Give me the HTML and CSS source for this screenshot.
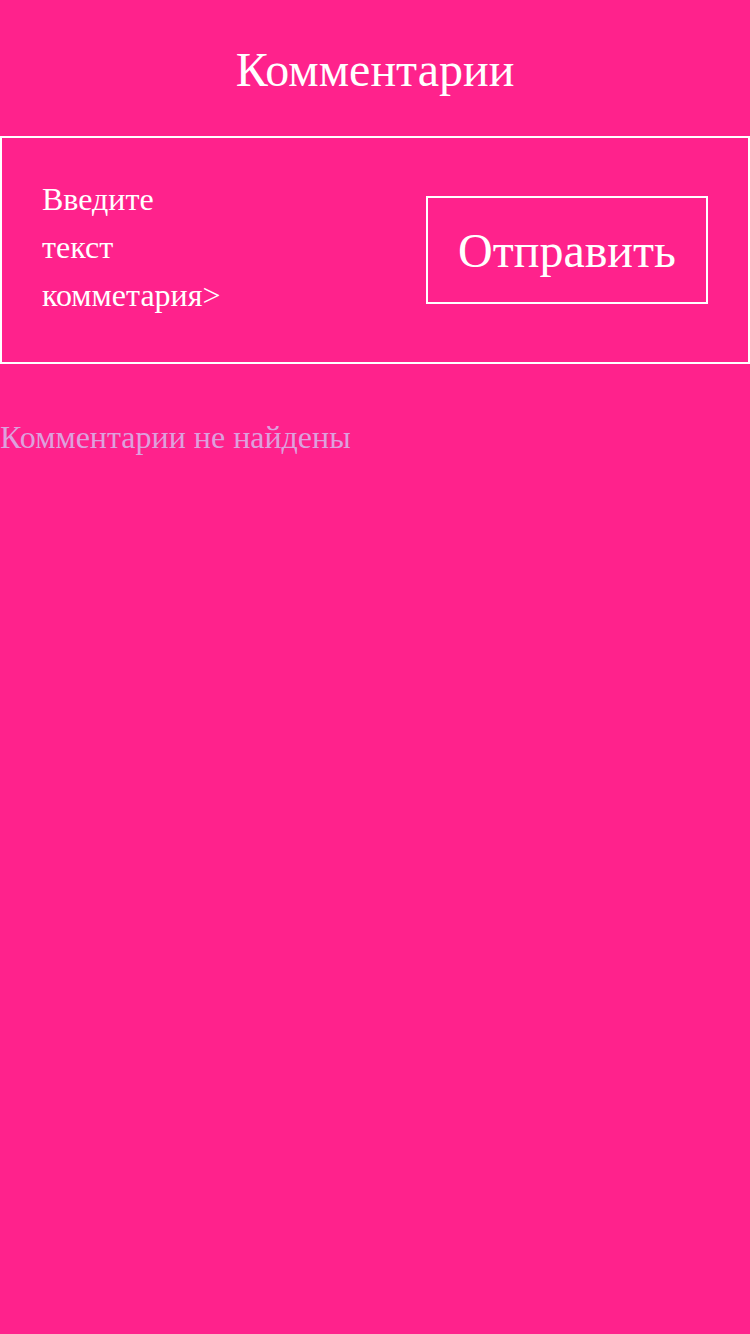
FILE: index.html
```html
<!DOCTYPE html>
<html lang="ru">
<head>
<meta charset="utf-8">
<link rel="stylesheet" href="styles.css">
</head>
<body>
<div class="page">
  <header class="header"><h1 class="title">Комментарии</h1></header>
  <section class="form">
    <div class="input">Введите текст комметария&gt;</div>
    <div class="button">Отправить</div>
  </section>
  <p class="empty">Комментарии не найдены</p>
</div>
</body>
</html>
```
FILE: styles.css
```css
html, body {
  margin: 0;
  padding: 0;
  background: #ff228c;
}
.page {
  width: 750px;
  min-height: 1334px;
  background: #ff228c;
  font-family: "Liberation Serif", "Times New Roman", serif;
  color: #ffffff;
}
.header {
  height: 136px;
  display: flex;
  align-items: center;
  justify-content: center;
}
.title {
  margin: 0;
  font-weight: normal;
  font-size: 48px;
  line-height: 1;
  padding-top: 4px;
}
.form {
  box-sizing: border-box;
  height: 228px;
  border: 2px solid #ffffff;
  padding: 0 40px;
  display: flex;
  align-items: center;
  justify-content: space-between;
}
.input {
  width: 184px;
  font-size: 32px;
  line-height: 48px;
  padding-bottom: 6px;
}
.button {
  box-sizing: border-box;
  width: 282px;
  height: 108px;
  border: 2px solid #ffffff;
  display: flex;
  align-items: center;
  justify-content: center;
  font-size: 48px;
}
.empty {
  margin: 53px 0 0;
  font-size: 32px;
  line-height: 40px;
  color: #dda0dd;
}
```
